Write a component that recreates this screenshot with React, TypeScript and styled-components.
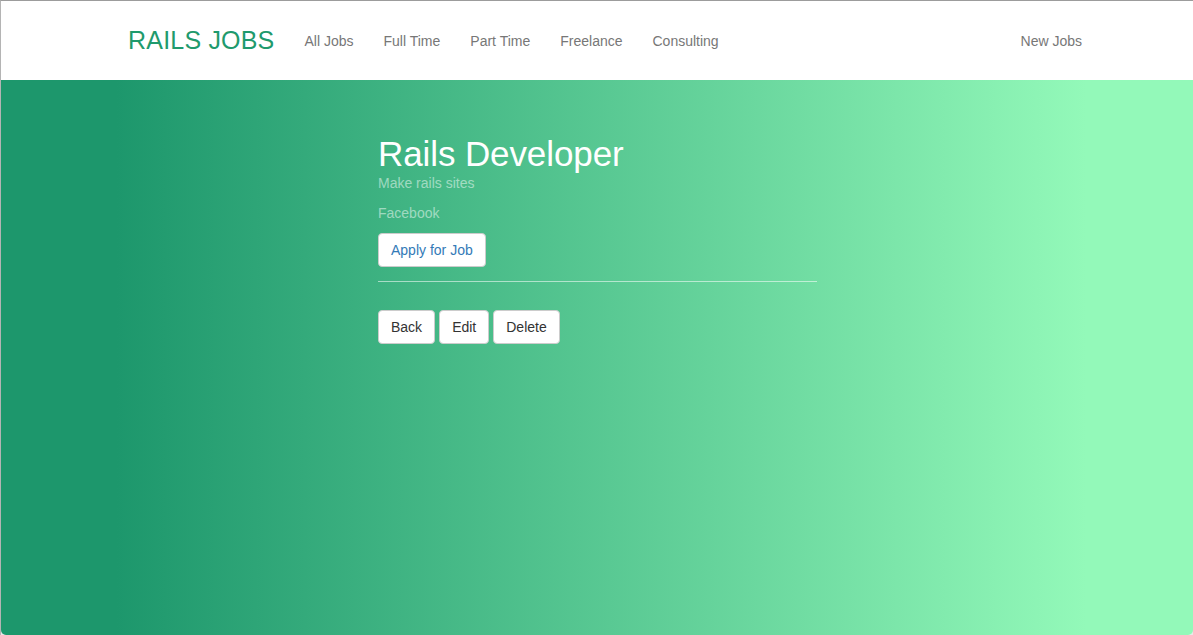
import React from "react";
import styled, { createGlobalStyle } from "styled-components";

const Global = createGlobalStyle`
  html, body { margin: 0; padding: 0; background: #ffffff; }
  body { font-family: "Liberation Sans", Arial, Helvetica, sans-serif; font-size: 14px; line-height: 20px; color: #333; }
  * { box-sizing: border-box; }
`;

const Page = styled.div`
  width: 1193px;
  height: 635px;
  display: flex;
  flex-direction: column;
  border-top: 1px solid #9c9c9c;
  border-left: 1px solid #b4b4b4;
  overflow: hidden;
  background: #e9e9e9;
`;

const Navbar = styled.nav`
  height: 79px;
  flex: none;
  display: flex;
  align-items: center;
  background: #ffffff;
  padding: 0 96px 0 112px;
`;

const Brand = styled.a`
  font-size: 25px;
  line-height: 25px;
  color: #1f9a6d;
  text-decoration: none;
  padding: 0 15px 0 15px;
  letter-spacing: 0.2px;
`;

const NavList = styled.ul`
  display: flex;
  list-style: none;
  margin: 0;
  padding: 0;
`;

const Spacer = styled.div`
  flex: 1;
`;

const NavLink = styled.a`
  display: block;
  padding: 0 15px;
  font-size: 14px;
  line-height: 20px;
  color: #777777;
  text-decoration: none;
`;

const Hero = styled.main`
  flex: 1;
  background: linear-gradient(to right, #1d976c 115px, #93f9b9 1085px);
  border-bottom-left-radius: 5px;
  border-bottom-right-radius: 5px;
  padding: 55px 0 0 377px;
`;

const Column = styled.section`
  width: 439px;
`;

const Title = styled.h1`
  margin: 0;
  font-size: 35px;
  line-height: 38px;
  font-weight: normal;
  color: #ffffff;
  letter-spacing: -0.1px;
`;

const Meta = styled.p`
  margin: 0 0 10px;
  font-size: 14px;
  line-height: 20px;
  color: rgba(255, 255, 255, 0.5);
`;

const Button = styled.a<{ $primaryText?: boolean }>`
  display: inline-block;
  padding: 6px 12px;
  font-size: 14px;
  line-height: 20px;
  background: #ffffff;
  border: 1px solid #cccccc;
  border-radius: 4px;
  color: ${(p) => (p.$primaryText ? "#337ab7" : "#333333")};
  text-decoration: none;
  cursor: pointer;
`;

const Rule = styled.hr`
  margin: 14px 0 28px;
  border: 0;
  border-top: 1px solid rgba(255, 255, 255, 0.55);
  height: 0;
`;

const ButtonRow = styled.div`
  display: flex;
  gap: 4px;
`;

export default function App() {
  return (
    <>
      <Global />
      <Page>
        <Navbar>
          <Brand href="#">RAILS JOBS</Brand>
          <NavList>
            <li><NavLink href="#">All Jobs</NavLink></li>
            <li><NavLink href="#">Full Time</NavLink></li>
            <li><NavLink href="#">Part Time</NavLink></li>
            <li><NavLink href="#">Freelance</NavLink></li>
            <li><NavLink href="#">Consulting</NavLink></li>
          </NavList>
          <Spacer />
          <NavList>
            <li><NavLink href="#">New Jobs</NavLink></li>
          </NavList>
        </Navbar>
        <Hero>
          <Column>
            <Title>Rails Developer</Title>
            <Meta>Make rails sites</Meta>
            <Meta>Facebook</Meta>
            <Button $primaryText href="#">Apply for Job</Button>
            <Rule />
            <ButtonRow>
              <Button href="#">Back</Button>
              <Button href="#">Edit</Button>
              <Button href="#">Delete</Button>
            </ButtonRow>
          </Column>
        </Hero>
      </Page>
    </>
  );
}
